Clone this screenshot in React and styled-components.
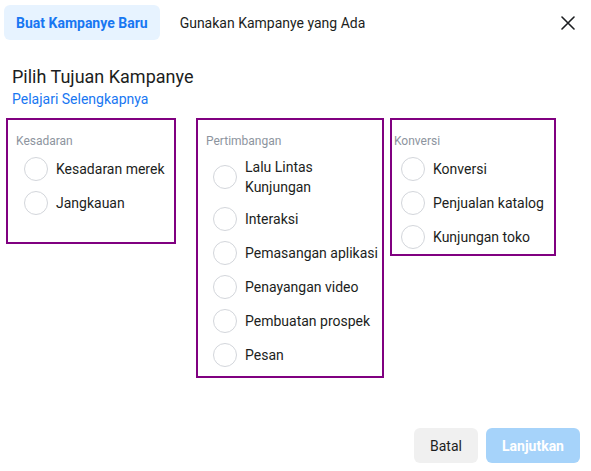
import React from "react";
import styled, { createGlobalStyle } from "styled-components";

const Global = createGlobalStyle`
  html, body { margin: 0; padding: 0; background: #fff; }
  body { font-family: Roboto, "Noto Sans", Arial, sans-serif; color: #1c1e21; }
  * { box-sizing: border-box; }
`;

const Page = styled.div`
  display: flex;
  flex-direction: column;
  height: 471px;
  width: 591px;
`;

const Header = styled.div`
  display: flex;
  align-items: center;
  gap: 8px;
  padding: 5px 11px 0 4px;
`;

const Tab = styled.button`
  border: none;
  height: 35px;
  padding: 0 12px;
  border-radius: 6px;
  font-family: inherit;
  font-size: 14px;
  cursor: pointer;
  background: ${(p) => (p.$active ? "#e7f3ff" : "transparent")};
  color: ${(p) => (p.$active ? "#1877f2" : "#1c1e21")};
  font-weight: ${(p) => (p.$active ? 700 : 400)};
`;

const Close = styled.button`
  margin-left: auto;
  width: 24px;
  height: 24px;
  border: none;
  background: none;
  padding: 0;
  display: flex;
  align-items: center;
  justify-content: center;
  color: #1c1e21;
`;

const Intro = styled.div`
  padding: 25px 12px 0;
`;

const Title = styled.h2`
  margin: 0;
  font-size: 18px;
  line-height: 24px;
  font-weight: 400;
  color: #1c1e21;
`;

const Link = styled.a`
  display: block;
  font-size: 14px;
  line-height: 20px;
  color: #1877f2;
  text-decoration: none;
`;

const Groups = styled.div`
  display: flex;
  align-items: flex-start;
  padding: 9px 0 0 6px;
`;

const Group = styled.div`
  border: 2px solid #800080;
  width: ${(p) => p.$w}px;
  height: ${(p) => p.$h}px;
  margin-right: ${(p) => p.$mr || 0}px;
  padding: 13px 0 0 ${(p) => p.$pl}px;
`;

const GroupLabel = styled.div`
  font-size: 12px;
  line-height: 16px;
  color: #8d949e;
  margin-bottom: 3px;
`;

const Options = styled.div`
  display: flex;
  flex-direction: column;
  padding-left: ${(p) => p.$indent}px;
`;

const Option = styled.label`
  display: flex;
  align-items: center;
  gap: 8px;
  padding: 5px 0;
  cursor: pointer;
`;

const Radio = styled.span`
  flex: none;
  width: 24px;
  height: 24px;
  border-radius: 50%;
  border: 1px solid #d3d6db;
  background: #fff;
`;

const OptionText = styled.span`
  font-size: 14px;
  line-height: 20px;
  color: #1c1e21;
`;

const Footer = styled.div`
  margin-top: auto;
  display: flex;
  justify-content: flex-end;
  gap: 8px;
  padding: 0 11px 8px 0;
`;

const Button = styled.button`
  height: 35px;
  width: ${(p) => (p.$primary ? 94 : 64)}px;
  padding: 0;
  border: none;
  border-radius: 6px;
  font-family: inherit;
  font-size: 14px;
  font-weight: ${(p) => (p.$primary ? 700 : 400)};
  background: ${(p) => (p.$primary ? "#a6d3fa" : "#f0f0f0")};
  color: ${(p) => (p.$primary ? "#ffffff" : "#1c1e21")};
`;

const groups = [
  {
    label: "Kesadaran",
    w: 170, h: 126, mr: 20, pl: 8, indent: 8,
    items: ["Kesadaran merek", "Jangkauan"],
  },
  {
    label: "Pertimbangan",
    w: 188, h: 260, mr: 6, pl: 8, indent: 7,
    items: [
      <>Lalu Lintas<br />Kunjungan</>,
      "Interaksi",
      "Pemasangan aplikasi",
      "Penayangan video",
      "Pembuatan prospek",
      "Pesan",
    ],
  },
  {
    label: "Konversi",
    w: 166, h: 138, mr: 0, pl: 2, indent: 7,
    items: ["Konversi", "Penjualan katalog", "Kunjungan toko"],
  },
];

export default function App() {
  return (
    <Page>
      <Global />
      <Header>
        <Tab $active>Buat Kampanye Baru</Tab>
        <Tab>Gunakan Kampanye yang Ada</Tab>
        <Close aria-label="Tutup">
          <svg width="14" height="14" viewBox="0 0 14 14">
            <path d="M1 1 L13 13 M13 1 L1 13" stroke="#1c1e21" strokeWidth="1.6" strokeLinecap="round" />
          </svg>
        </Close>
      </Header>
      <Intro>
        <Title>Pilih Tujuan Kampanye</Title>
        <Link href="#">Pelajari Selengkapnya</Link>
      </Intro>
      <Groups>
        {groups.map((g) => (
          <Group key={g.label} $w={g.w} $h={g.h} $mr={g.mr} $pl={g.pl}>
            <GroupLabel>{g.label}</GroupLabel>
            <Options $indent={g.indent}>
              {g.items.map((it, i) => (
                <Option key={i}>
                  <Radio />
                  <OptionText>{it}</OptionText>
                </Option>
              ))}
            </Options>
          </Group>
        ))}
      </Groups>
      <Footer>
        <Button>Batal</Button>
        <Button $primary>Lanjutkan</Button>
      </Footer>
    </Page>
  );
}
